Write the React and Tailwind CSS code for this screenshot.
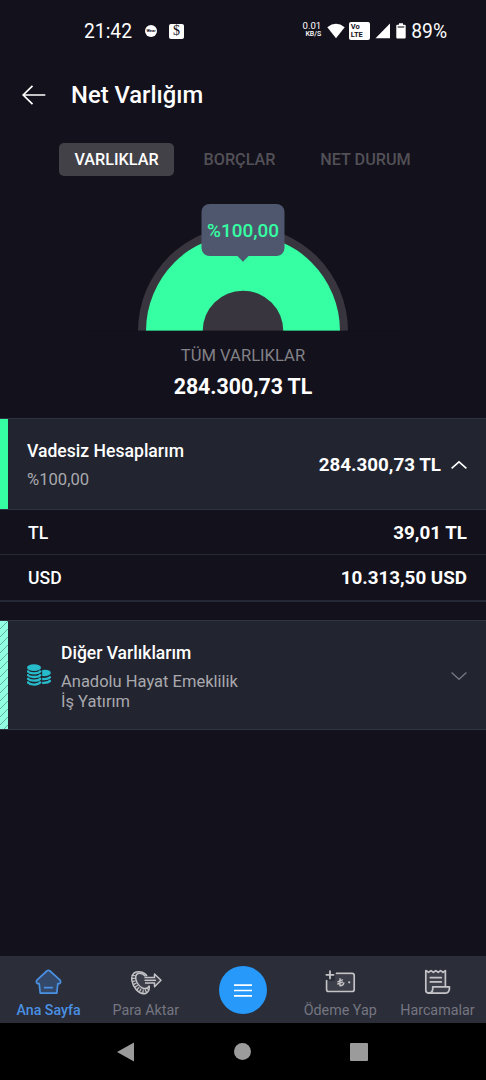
const tabs = ["VARLIKLAR", "BORÇLAR", "NET DURUM"];

const accounts = [
  { currency: "TL", amount: "39,01 TL" },
  { currency: "USD", amount: "10.313,50 USD" },
];

const StatusBar = () => (
  <div className="h-[62px] flex items-center pl-[84px] pr-[40px] text-[19.3px] leading-none">
    <span className="pt-[2px]">21:42</span>
    <span className="ml-[13px] w-3 h-3 rounded-full bg-white flex items-center justify-center text-[4px] font-bold text-[#13111b]">
      Wear
    </span>
    <span className="ml-3 w-[15px] h-[15px] rounded-[2px] bg-white flex items-center justify-center font-['Liberation_Serif',serif] text-[14px] text-[#13111b]">
      $
    </span>

    <div className="ml-auto -mr-px flex items-center">
      <div className="flex flex-col items-end leading-none">
        <span className="text-[9.6px] h-[10px] -mt-[3px]">0.01</span>
        <span className="text-[7px] font-medium h-[7px]">KB/S</span>
      </div>
      <svg className="ml-[6px] w-[18px] h-4" viewBox="0 0 18 16" fill="white">
        <path d="M0.3 4.3 Q9 -2.6 17.7 4.3 L9 15.3 Z" />
      </svg>
      <div className="ml-1 w-[21px] h-[18px] rounded-[2px] bg-white text-[#13111b] text-[7.5px] font-bold leading-[7.5px] pl-[1.5px] pt-[1.5px]">
        <div>Vo</div>
        <div>LTE</div>
      </div>
      <svg className="ml-[5px] w-[15px] h-4" viewBox="0 0 15 16" fill="white">
        <path d="M15 0.5 V15.3 H0.5 Z" />
      </svg>
      <svg className="ml-[6px] w-[10px] h-4" viewBox="0 0 10 16">
        <path
          d="M3 0.3 H7 V1.8 H8.8 Q9.7 1.8 9.7 2.8 V14.5 Q9.7 15.6 8.7 15.6 H1.3 Q0.3 15.6 0.3 14.5 V2.8 Q0.3 1.8 1.2 1.8 H3 Z"
          fill="white"
        />
        <path d="M1.7 4 H8.3" stroke="#13111b" strokeWidth="1.1" />
      </svg>
      <span className="ml-[5px] pt-[2px]">89%</span>
    </div>
  </div>
);

const Header = () => (
  <div className="h-[66px] flex items-center pl-[22px]">
    <svg
      className="w-6 h-5"
      viewBox="0 0 24 20"
      fill="none"
      stroke="white"
      strokeWidth="1.7"
    >
      <path d="M10.5 0.8 L1.2 10 L10.5 19.2 M1.2 10 H23.3" />
    </svg>
    <h1 className="ml-[25px] pt-[2px] text-[23.8px] font-medium leading-none">
      Net Varlığım
    </h1>
  </div>
);

const Chart = () => (
  <div className="relative mt-7 h-[128px] flex justify-center">
    <svg className="w-[320px] h-[128px]" viewBox="0 0 320 128">
      <path d="M55 128 A105 105 0 0 1 265 128 Z" fill="#38353e" />
      <path d="M63 128 A97 97 0 0 1 257 128 Z" fill="#35ffa2" />
      <path d="M119.7 128 A40.3 40.3 0 0 1 200.3 128 Z" fill="#38353e" />
      <path d="M0 127.5 H320" stroke="#0d0b14" strokeOpacity="0.35" />
    </svg>
    <div className="absolute top-px left-1/2 -translate-x-1/2 w-[83px] h-[52px] pt-[2px] rounded-lg bg-[#4e576e] flex items-center justify-center text-[18.9px] font-medium text-[#35ffa2]">
      %100,00
      <svg
        className="absolute top-[51px] left-[35px] w-[13px] h-[8px]"
        viewBox="0 0 13 8"
        fill="#4e576e"
      >
        <path d="M0 0 H13 L6.5 6.7 Z" />
      </svg>
    </div>
  </div>
);

const CoinsIcon = () => (
  <svg className="-mt-px w-6 h-[23px]" viewBox="0 0 24 23" fill="#27bccb">
    <ellipse cx="7" cy="3.7" rx="7" ry="3.4" />
    <path d="M15.2 6 Q19 5 22.5 6.8 Q24.8 8.6 23 10.6 Q20 12.6 15.2 12 Z" />
    <g fill="none" stroke="#27bccb" strokeWidth="2.3">
      <path d="M0.2 6.6 Q2 9.3 7 9.3 T13.8 6.6" />
      <path d="M0.2 10.3 Q2 13 7 13 T13.8 10.3" />
      <path d="M0.2 14 Q2 16.7 7 16.7 T13.8 14" />
      <path d="M0.2 17.7 Q2 20.6 7 20.6 T13.8 17.7" />
      <path d="M15.2 15 Q21.5 15.5 23.8 12.5" />
      <path d="M15.2 18.8 Q21.5 19.3 23.8 16.3" />
    </g>
  </svg>
);

const HomeIcon = () => (
  <svg
    className="w-8 h-7"
    viewBox="0 0 32 28"
    fill="#34496a"
    stroke="#4a90e2"
    strokeWidth="1.7"
    strokeLinejoin="round"
    strokeLinecap="round"
  >
    <path d="M13.8 3 Q15.4 1.6 17 3 L26.8 11.8 Q28.6 14.4 26.6 15.6 H24.8 L23.8 25.2 H7.2 L6.2 15.6 H4.4 Q2.4 14.4 4.2 11.8 Z" />
    <path d="M11.6 19.7 H19.2" />
  </svg>
);

const TransferIcon = () => (
  <svg
    className="w-8 h-7"
    viewBox="0 0 32 28"
    fill="none"
    stroke="#c4c4c8"
    strokeWidth="1.5"
    strokeLinejoin="round"
  >
    <path
      d="M17 8 C14 3.2 7.5 3.2 4 5 C0 8.5 1.5 16.5 6.5 22 C10 25.5 13.5 26.3 16 25.2 C18.5 24 19.5 21.5 19.3 17.5"
      fill="#3c3f49"
    />
    <path d="M15.5 8.3 C12 4.2 7 4.2 5.8 8 C4.8 12 8 18 12.5 20 C15.5 21.2 18 20.3 19.2 18.2" />
    <path
      d="M3.6 7 C2.5 13 6 20 10.7 22.3 C13.5 23.8 16 23.3 18.2 20.8"
      strokeWidth="3.6"
      strokeDasharray="1.2 1.6"
    />
    <path d="M14.5 9.5 H24.5 V6 L31 12.3 L24.5 18.8 V15.1 H15" fill="#3c3f49" />
    <path d="M14.5 12.3 H26" />
  </svg>
);

const PaymentIcon = () => (
  <svg
    className="w-8 h-7"
    viewBox="0 0 32 28"
    fill="none"
    stroke="#c4c4c8"
    strokeWidth="1.7"
    strokeLinecap="round"
    strokeLinejoin="round"
  >
    <path d="M11 7 H29.5 V23 H4 V13 H11 Z" fill="#3c3f49" stroke="none" />
    <path d="M12.5 5.4 H28 Q30.2 5.4 30.2 7.5 V21.4 Q30.2 23.5 28 23.5 H4.8 Q2.6 23.5 2.6 21.4 V12.5" />
    <path d="M6 3.2 V10.4 M2.4 6.8 H9.6" strokeWidth="1.8" />
    <path
      d="M16 10.6 V17.8 Q19.5 17.6 19.8 14.9 M13.8 13.8 L18.4 11.9 M13.8 16 L18.4 14.1"
      strokeWidth="1.4"
    />
    <circle cx="25.2" cy="14.3" r="1.1" fill="#c4c4c8" stroke="none" />
  </svg>
);

const ReceiptIcon = () => (
  <svg
    className="w-8 h-7"
    viewBox="0 0 32 28"
    fill="#3c3f49"
    stroke="#c4c4c8"
    strokeWidth="1.7"
    strokeLinejoin="round"
    strokeLinecap="round"
  >
    <path d="M24.4 18.5 V2.6 L22 4.3 L19.6 2.6 L17.2 4.3 L14.8 2.6 L12.4 4.3 L10 2.6 L7.6 4.3 L4.8 2.6 V22.3 Q4.8 25.2 8 25.2 H24" />
    <path d="M11.7 18.8 H28.4 V21 Q28 25.2 24 25.2 H8 Q11.3 24.6 11.7 21.6 Z" />
    <path d="M9.3 9.6 H20.3 M9.3 13.9 H20.3" />
  </svg>
);

const MenuButton = () => (
  <div className="mt-[10px] w-[48px] h-[48px] rounded-full bg-[#2699fb] flex items-center justify-center">
    <svg
      className="w-[18px] h-[13px]"
      viewBox="0 0 18 13"
      stroke="white"
      strokeWidth="1.7"
    >
      <path d="M0 1.2 H18 M0 6.5 H18 M0 11.8 H18" />
    </svg>
  </div>
);

const NavItem = ({ icon, label, active }) => (
  <div className="flex flex-col items-center pt-3">
    {icon}
    <span
      className={
        active
          ? "mt-[6px] text-[14.2px] leading-4 font-medium text-[#4a90e2] whitespace-nowrap"
          : "mt-[6px] text-[14.3px] leading-4 text-[#757681] whitespace-nowrap"
      }
    >
      {label}
    </span>
  </div>
);

const App = () => {
  return (
    <div className="w-[486px] h-[1080px] flex flex-col overflow-hidden bg-[#13111b] text-white font-[Roboto,sans-serif]">
      <StatusBar />
      <Header />

      <div className="mt-[15px] ml-[59px] h-8 flex items-center text-[16.2px] font-medium">
        {tabs.map((tab, i) => (
          <div
            key={tab}
            className={
              i === 0
                ? "w-[115px] h-[33px] pt-[2px] rounded-[5px] bg-[#434148] flex items-center justify-center"
                : "w-[115px] ml-[8px] last:ml-[11px] pt-[2px] flex items-center justify-center text-[#525057] whitespace-nowrap"
            }
          >
            {tab}
          </div>
        ))}
      </div>

      <Chart />

      <div className="h-[87px] pt-[15px] flex flex-col items-center">
        <p className="text-[16.6px] leading-5 text-[#828187]">TÜM VARLIKLAR</p>
        <p className="mt-[9px] text-[21.3px] leading-6 font-bold">
          284.300,73 TL
        </p>
      </div>

      <section>
        <div className="h-[92px] flex border-y border-[#2e323e] bg-[#22242f]">
          <div className="w-2 bg-[#35ffa2]" />
          <div className="flex-1 flex items-center justify-between pt-[2px] pl-[19px] pr-[19px]">
            <div>
              <h2 className="text-[17.6px] leading-6 font-medium">
                Vadesiz Hesaplarım
              </h2>
              <p className="mt-[5px] text-[16.6px] leading-6 text-[#a9a9ae]">
                %100,00
              </p>
            </div>
            <div className="flex items-center">
              <span className="text-[18.8px] font-bold">284.300,73 TL</span>
              <svg
                className="ml-[10px] w-4 h-[10px]"
                viewBox="0 0 16 10"
                fill="none"
                stroke="white"
                strokeWidth="1.6"
              >
                <path d="M0.6 8.3 L8 1.8 L15.4 8.3" />
              </svg>
            </div>
          </div>
        </div>

        {accounts.map((item) => (
          <div
            key={item.currency}
            className="h-[45px] last:h-[47px] pt-[2px] flex items-center justify-between pl-[28px] pr-[19px] border-b border-[#252936] last:border-b-2"
          >
            <span className="text-[17.6px] font-medium">{item.currency}</span>
            <span className="text-[18.8px] font-bold">{item.amount}</span>
          </div>
        ))}
      </section>

      <section className="mt-[18px] h-[110px] flex border-y border-[#2e3440] bg-[#22242f]">
        <svg className="w-2 h-[108px]" viewBox="0 0 8 108">
          <defs>
            <pattern
              id="stripes"
              width="8"
              height="8"
              patternUnits="userSpaceOnUse"
            >
              <rect width="8" height="8" fill="#92ffe3" />
              <path
                d="M-1 9 L9 -1 M-1 1 L1 -1 M7 9 L9 7"
                stroke="#5fb0a5"
                strokeWidth="1"
              />
            </pattern>
          </defs>
          <rect width="8" height="108" fill="url(#stripes)" />
        </svg>
        <div className="flex-1 flex items-center pt-[2px] pl-[19px] pr-[19px]">
          <CoinsIcon />
          <div className="ml-[10px]">
            <h2 className="text-[17.5px] leading-6 font-medium">
              Diğer Varlıklarım
            </h2>
            <p className="mt-[7px] text-[16.5px] leading-[19.5px] text-[#a9a9ae]">
              Anadolu Hayat Emeklilik
              <br />
              İş Yatırım
            </p>
          </div>
          <svg
            className="ml-auto w-4 h-[10px]"
            viewBox="0 0 16 10"
            fill="none"
            stroke="#74757d"
            strokeWidth="1.4"
          >
            <path d="M0.6 1.5 L8 8.2 L15.4 1.5" />
          </svg>
        </div>
      </section>

      <nav className="mt-auto h-[67px] shrink-0 grid grid-cols-5 bg-[#2b2d38]">
        <NavItem icon={<HomeIcon />} label="Ana Sayfa" active />
        <NavItem icon={<TransferIcon />} label="Para Aktar" />
        <div className="flex justify-center">
          <MenuButton />
        </div>
        <NavItem icon={<PaymentIcon />} label="Ödeme Yap" />
        <NavItem icon={<ReceiptIcon />} label="Harcamalar" />
      </nav>

      <div className="h-[57px] shrink-0 bg-black flex items-center justify-between pl-[117px] pr-[118px]">
        <svg className="w-[17px] h-5" viewBox="0 0 17 20" fill="#9b9b9b">
          <path d="M17 0.5 V19.5 L0 10 Z" />
        </svg>
        <div className="w-[17px] h-[17px] rounded-full bg-[#9b9b9b]" />
        <div className="w-[18px] h-[18px] rounded-[1px] bg-[#9b9b9b]" />
      </div>
    </div>
  );
};

export default App;
